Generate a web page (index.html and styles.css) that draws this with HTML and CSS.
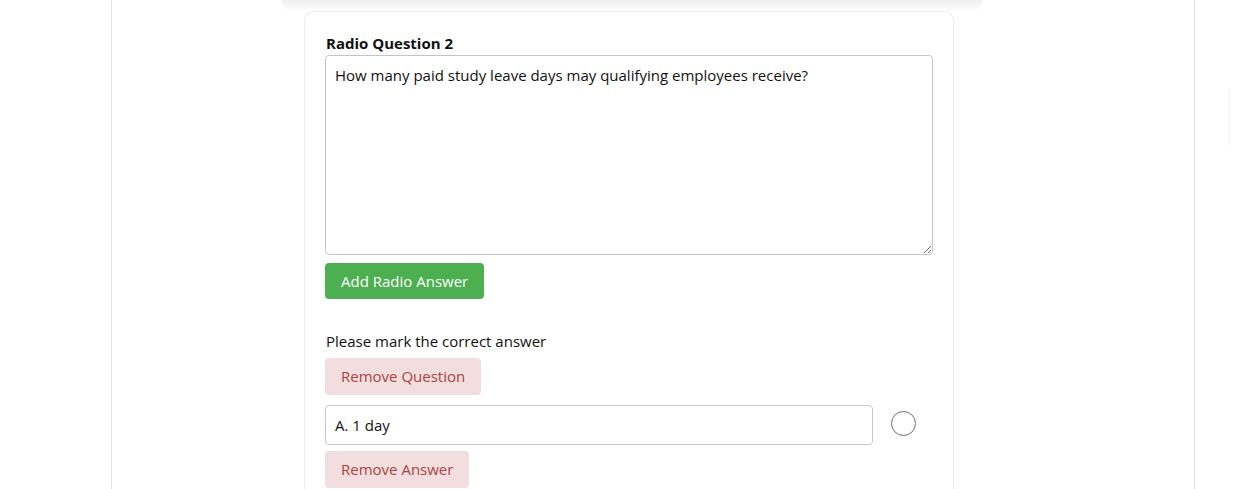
FILE: index.html
```html
<!DOCTYPE html>
<html lang="en">
<head>
<meta charset="utf-8">
<title>Radio Question</title>
<link rel="stylesheet" href="styles.css">
</head>
<body>
<div class="frame">
  <div class="panel">
    <div class="panel-shadow"></div>
    <div class="card">
      <label class="q-label" for="q2">Radio Question 2</label>
      <textarea id="q2" class="q-text">How many paid study leave days may qualifying employees receive?</textarea>
      <div class="actions">
        <button class="btn btn-green" type="button">Add Radio Answer</button>
      </div>
      <p class="hint">Please mark the correct answer</p>
      <div class="actions tight">
        <button class="btn btn-danger" type="button">Remove Question</button>
      </div>
      <div class="answer-row">
        <input class="answer-input" type="text" value="A. 1 day">
        <span class="radio"></span>
      </div>
      <div class="actions small">
        <button class="btn btn-danger" type="button">Remove Answer</button>
      </div>
    </div>
  </div>
</div>
<div class="edge-mark"></div>
</body>
</html>
```

FILE: styles.css
```css
* { box-sizing: border-box; }

html, body {
  margin: 0;
  padding: 0;
  background: #ffffff;
  height: 489px;
  overflow: hidden;
}

body {
  font-family: "Open Sans", "Noto Sans", sans-serif;
  font-size: 15px;
  line-height: 20px;
  color: #111;
  position: relative;
}

.frame {
  margin-left: 111px;
  width: 1084px;
  height: 489px;
  overflow: hidden;
  border-left: 1px solid #e2e2e2;
  border-right: 1px solid #e2e2e2;
}

.panel {
  margin-left: 170px;
  width: 700px;
}

.panel-shadow {
  height: 11px;
  background: linear-gradient(#efefef, #fbfbfb 80%, #ffffff);
  border-radius: 0 0 10px 10px;
}

.card {
  margin-left: 22px;
  width: 650px;
  border: 1px solid #ececec;
  border-bottom: none;
  border-radius: 10px 10px 0 0;
  padding: 21px 20px 0 20px;
  height: 478px;
  background: #fff;
}

.q-label {
  display: block;
  font-weight: 700;
  padding-left: 1px;
  margin-bottom: 2px;
  color: #111;
}

.q-text {
  display: block;
  width: 608px;
  height: 200px;
  border: 1px solid #c4c4c4;
  border-radius: 4px;
  padding: 9px 9px;
  font-family: "Open Sans", "Noto Sans", sans-serif;
  font-size: 15px;
  line-height: 20px;
  color: #111;
  resize: vertical;
  margin: 0;
}

.actions {
  display: flex;
  margin-top: 8px;
}

.actions.tight { margin-top: 7px; }
.actions.small { margin-top: 6px; }

.btn {
  font-family: "Open Sans", "Noto Sans", sans-serif;
  font-size: 15px;
  line-height: 20px;
  border: none;
  border-radius: 4px;
  padding: 8px 16px;
  cursor: pointer;
}

.btn-green {
  background: #4caf50;
  color: #ffffff;
}

.btn-danger {
  background: #f2dede;
  color: #a94442;
  padding: 8px 16px 9px 16px;
}

.hint {
  margin: 32px 0 0 1px;
  color: #111;
}

.answer-row {
  display: flex;
  align-items: center;
  margin-top: 10px;
}

.answer-input {
  width: 548px;
  height: 40px;
  border: 1px solid #c8c8c8;
  border-radius: 4px;
  padding: 0 9px;
  font-family: "Open Sans", "Noto Sans", sans-serif;
  font-size: 15px;
  color: #111;
}

.radio {
  width: 25px;
  height: 25px;
  border: 1px solid #707070;
  border-radius: 50%;
  margin-left: 18px;
  margin-top: -3px;
  background: #fff;
}

.edge-mark {
  position: absolute;
  left: 1229px;
  top: 88px;
  width: 1px;
  height: 58px;
  background: #f7f7f7;
}
```
